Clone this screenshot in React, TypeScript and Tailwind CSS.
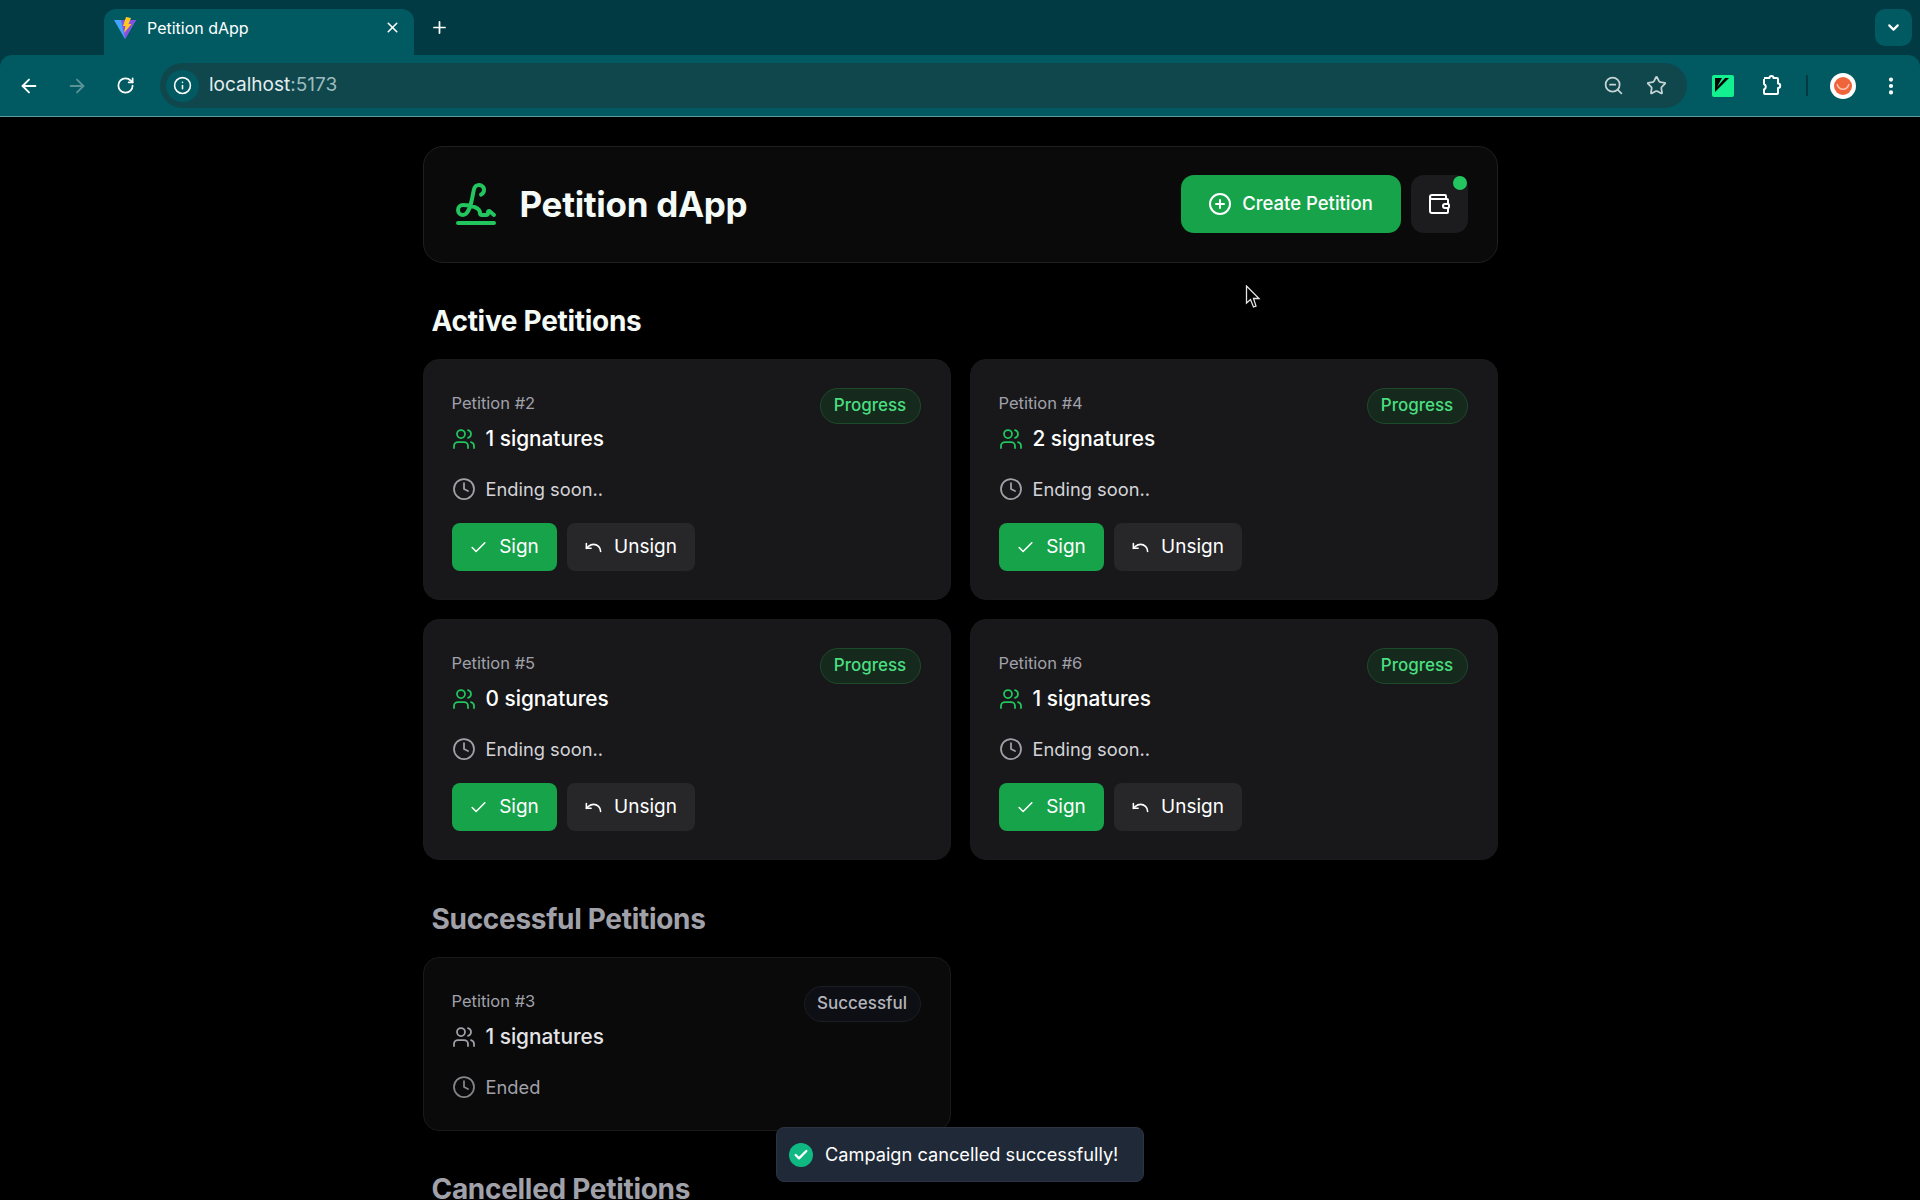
import {
  ArrowLeft,
  ArrowRight,
  Check,
  ChevronDown,
  CirclePlus,
  Clock,
  EllipsisVertical,
  Info,
  Plus,
  RotateCw,
  Signature,
  Star,
  Undo,
  Users,
  Wallet,
  X,
  ZoomOut,
} from "lucide-react";

const active = [
  { id: 2, count: 1 },
  { id: 4, count: 2 },
  { id: 5, count: 0 },
  { id: 6, count: 1 },
];

function ViteIcon() {
  return (
    <svg viewBox="0 0 24 24" className="w-[24px] h-[26px]">
      <path d="M1 4 L23 4 L12 23 Z" fill="#41a5ff" />
      <path d="M8 4 L23 4 L12 23 Z" fill="#8b4fe0" />
      <path d="M13 1 L18 2 L15.5 8 L18.5 8 L11 17 L12.5 10 L10 10 Z" fill="#ffc91f" />
    </svg>
  );
}

function PuzzleIcon() {
  return (
    <svg viewBox="0 0 24 24" className="ml-[25px] w-[24px] h-[24px]" fill="none" stroke="currentColor" strokeWidth="2" strokeLinejoin="round">
      <path d="M5 4h5.5a2 2 0 0 1 4 0H18a1 1 0 0 1 1 1v4.5a2.2 2.2 0 0 1 0 4.4V19a1 1 0 0 1-1 1H6a1 1 0 0 1-1-1v-3.5a3 3 0 0 0 0-5.5V5" />
    </svg>
  );
}

function BrowserChrome() {
  return (
    <div className="bg-[#013a42] text-white">
      <div className="h-[55px] flex items-end pl-[104px] pr-[8px]">
        <div className="w-[310px] h-[46px] bg-[#015a62] rounded-t-[12px] flex items-center pl-[9px] pr-[13px] pb-[9px]">
          <ViteIcon />
          <span className="ml-[10px] text-[16px] text-white flex-1">Petition dApp</span>
          <X size={17} strokeWidth={2.2} />
        </div>
        <Plus size={19} strokeWidth={2.2} className="ml-[16px] mb-[18px]" />
        <div className="ml-auto mb-[9px] w-[37px] h-[37px] rounded-[10px] bg-[#015a62] flex items-center justify-center">
          <ChevronDown size={17} strokeWidth={3} />
        </div>
      </div>
      <div className="h-[62px] bg-[#015a62] rounded-t-[12px] flex items-center pl-[18px] pr-[12px] border-b border-[#5f9ba0]">
        <ArrowLeft size={22} strokeWidth={2} />
        <ArrowRight size={22} strokeWidth={2} className="ml-[26px] text-[#5b9296]" />
        <RotateCw size={19} strokeWidth={2.2} className="ml-[28px]" />
        <div className="ml-[25px] w-[1527px] h-[45px] rounded-full bg-[#0f474c] flex items-center pl-[6px] pr-[20px]">
          <div className="w-[33px] h-[32px] rounded-full bg-[#015a62] flex items-center justify-center">
            <Info size={19} strokeWidth={2} />
          </div>
          <span className="ml-[10px] text-[19px] text-[#e4eeef] flex-1">
            localhost<span className="text-[#9cbcbe]">:5173</span>
          </span>
          <ZoomOut size={21} strokeWidth={2} className="text-[#c4d3d4]" />
          <Star size={21} strokeWidth={2} className="ml-[22px] text-[#c4d3d4]" />
        </div>
        <svg viewBox="0 0 22 22" className="ml-[25px] w-[22px] h-[22px]">
          <rect width="22" height="22" rx="2" fill="#12f08f" />
          <path d="M3 3 H17 L3 17 Z" fill="#000" />
          <path d="M10 3 H13 L5 12 Z" fill="#12f08f" />
        </svg>
        <PuzzleIcon />
        <div className="ml-[23px] w-[2px] h-[21px] bg-[#013a42]" />
        <div className="ml-[22px] w-[26px] h-[26px] rounded-full bg-white flex items-center justify-center">
          <svg viewBox="0 0 20 20" className="w-[20px] h-[20px]">
            <circle cx="10" cy="10" r="9" fill="#f0643c" />
            <path d="M4 8 C6 15 14 15 16 8" stroke="#ffc4b0" strokeWidth="1.5" fill="none" />
          </svg>
        </div>
        <EllipsisVertical size={22} strokeWidth={2.6} className="ml-[24px]" />
      </div>
    </div>
  );
}

function Header() {
  return (
    <header className="h-[117px] rounded-[20px] border border-[#1f1f22] bg-[#0a0a0a] flex items-center pl-[28px] pr-[29px]">
      <Signature size={48} strokeWidth={2} className="text-[#22c55e]" />
      <h1 className="ml-[20px] text-[35px] font-bold text-[#f4faf6] tracking-[-0.3px]">Petition dApp</h1>
      <button className="ml-auto -mt-[2px] w-[220px] h-[58px] rounded-[13px] bg-[#16a34a] flex items-center justify-center gap-[10px] text-white text-[18.5px] font-medium">
        <CirclePlus size={24} strokeWidth={2} />
        Create Petition
      </button>
      <button className="relative ml-[10px] -mt-[2px] w-[57px] h-[58px] rounded-[13px] bg-[#1c1c1e] flex items-center justify-center text-white">
        <Wallet size={24} strokeWidth={2} />
        <span className="absolute right-[1px] top-[1px] w-[14px] h-[14px] rounded-full bg-[#22c55e]" />
      </button>
    </header>
  );
}

function SectionTitle({ children, muted }: { children: string; muted?: boolean }) {
  return (
    <h2 className={`text-[28px] leading-[36px] font-bold tracking-[-0.3px] px-[9px] ${muted ? "text-[#a1a1aa]" : "text-[#f4faf6]"}`}>
      {children}
    </h2>
  );
}

function ActiveCard({ id, count }: { id: number; count: number }) {
  return (
    <div className="h-[241px] rounded-[16px] bg-[#18181b] border border-[#1a1a1d] pl-[28px] pr-[29px] pt-[28px]">
      <div className="flex items-start justify-between">
        <div>
          <div className="text-[16.5px] leading-[30px] text-[#a1a1aa]">Petition #{id}</div>
          <div className="flex items-center gap-[10px] mt-[6px] leading-[30px] text-[20.8px] font-medium text-white">
            <Users size={24} strokeWidth={1.75} className="text-[#22c55e]" />
            {count} signatures
          </div>
        </div>
        <span className="h-[36px] w-[101px] rounded-full border border-[#1e4a2c] bg-[#15291d] flex items-center justify-center text-[17px] font-medium text-[#4ade80]">
          Progress
        </span>
      </div>
      <div className="flex items-center gap-[10px] mt-[20px] text-[18.3px] leading-[30px] text-[#d4d4d8]">
        <Clock size={24} strokeWidth={1.75} className="text-[#a1a1aa]" />
        Ending soon..
      </div>
      <div className="flex gap-[10px] mt-[19px]">
        <button className="w-[105px] h-[48px] rounded-[8px] bg-[#16a34a] flex items-center justify-center gap-[11px] text-white text-[19px]">
          <Check size={19} strokeWidth={2} />
          Sign
        </button>
        <button className="w-[128px] h-[48px] rounded-[8px] bg-[#27272a] flex items-center justify-center gap-[11px] text-white text-[19px]">
          <Undo size={19} strokeWidth={2} />
          Unsign
        </button>
      </div>
    </div>
  );
}

function SuccessfulCard() {
  return (
    <div className="h-[174px] rounded-[16px] bg-[#0a0a0a] border border-[#1a1a1d] pl-[28px] pr-[29px] pt-[28px]">
      <div className="flex items-start justify-between">
        <div>
          <div className="text-[16.5px] leading-[30px] text-[#a1a1aa]">Petition #3</div>
          <div className="flex items-center gap-[10px] mt-[6px] leading-[30px] text-[20.8px] font-medium text-[#e4e4e7]">
            <Users size={24} strokeWidth={1.75} className="text-[#a1a1aa]" />
            1 signatures
          </div>
        </div>
        <span className="h-[36px] w-[117px] rounded-full border border-[#1b1d22] bg-[#0d0f14] flex items-center justify-center text-[17px] font-medium text-[#b4b4bb]">
          Successful
        </span>
      </div>
      <div className="flex items-center gap-[10px] mt-[20px] text-[18.3px] leading-[30px] text-[#a1a1aa]">
        <Clock size={24} strokeWidth={1.75} className="text-[#85858c]" />
        Ended
      </div>
    </div>
  );
}

export default function App() {
  return (
    <div className="relative w-[1920px] h-[1200px] overflow-hidden bg-black font-['Inter',sans-serif]">
      <BrowserChrome />
      <main className="w-[1075px] mx-auto pt-[29px]">
        <Header />
        <section className="mt-[40px]">
          <SectionTitle>Active Petitions</SectionTitle>
          <div className="grid grid-cols-2 gap-[19px] mt-[20px]">
            {active.map((p) => (
              <ActiveCard key={p.id} id={p.id} count={p.count} />
            ))}
          </div>
        </section>
        <section className="mt-[41px]">
          <SectionTitle muted>Successful Petitions</SectionTitle>
          <div className="grid grid-cols-2 gap-[19px] mt-[20px]">
            <SuccessfulCard />
          </div>
        </section>
        <section className="mt-[40px]">
          <SectionTitle muted>Cancelled Petitions</SectionTitle>
        </section>
      </main>

      <div className="absolute left-[776px] top-[1127px] w-[368px] h-[55px] rounded-[8px] bg-[#1f2937] border border-[#2a3442] flex items-center pl-[12px] text-white text-[18.2px]">
        <span className="w-[24px] h-[24px] rounded-full bg-[#10b981] flex items-center justify-center">
          <Check size={16} strokeWidth={3.5} />
        </span>
        <span className="ml-[12px]">Campaign cancelled successfully!</span>
      </div>

      <svg viewBox="0 0 16 24" className="absolute left-[1245px] top-[285px] w-[16px] h-[24px]">
        <path d="M1.5 1 L1.5 18 L5.5 14.5 L8.5 22 L11 21 L8.5 13.5 L14 13.5 Z" fill="#000" stroke="#e5e5e5" strokeWidth="1.3" />
      </svg>
    </div>
  );
}
